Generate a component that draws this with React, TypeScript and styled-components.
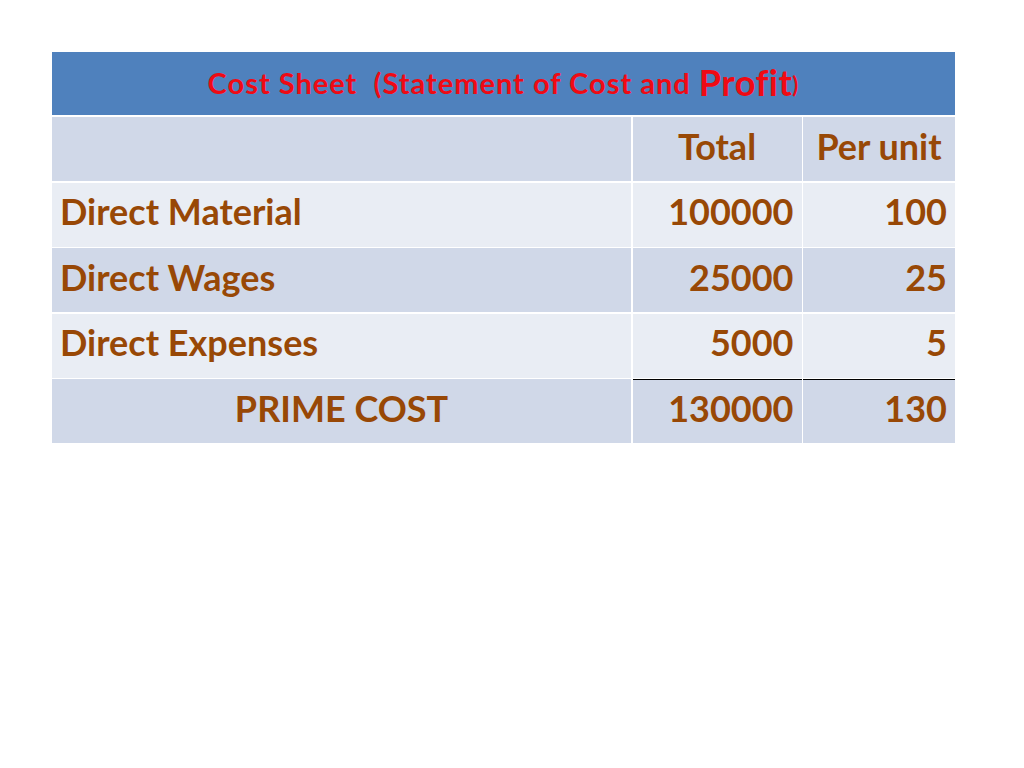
import styled, { createGlobalStyle } from 'styled-components';

const GlobalStyle = createGlobalStyle`
  html, body {
    margin: 0;
    padding: 0;
    background: #ffffff;
  }
  body {
    font-family: Lato, "Open Sans", sans-serif;
    font-variant-ligatures: none;
  }
`;

interface Row {
  label: string;
  total: string;
  perUnit: string;
}

const rows: Row[] = [
  { label: 'Direct Material', total: '100000', perUnit: '100' },
  { label: 'Direct Wages', total: '25000', perUnit: '25' },
  { label: 'Direct Expenses', total: '5000', perUnit: '5' },
];

const App = () => (
  <>
    <GlobalStyle />
    <Page>
      <Sheet>
        <TitleBar>
          Cost Sheet&nbsp; (Statement of Cost and <Big>Profit</Big>
          <Small>)</Small>
        </TitleBar>
        <Grid>
          <Cell $shade="dark" />
          <Cell $shade="dark" $align="center">
            Total
          </Cell>
          <Cell $shade="dark" $align="center">
            Per unit
          </Cell>
          {rows.map((row, i) => {
            const shade = i % 2 === 0 ? 'light' : 'dark';
            return [
              <Cell key={`${row.label}-l`} $shade={shade}>
                {row.label}
              </Cell>,
              <Cell key={`${row.label}-t`} $shade={shade} $align="right">
                {row.total}
              </Cell>,
              <Cell key={`${row.label}-p`} $shade={shade} $align="right">
                {row.perUnit}
              </Cell>,
            ];
          })}
          <Cell $shade="dark" $align="center">
            PRIME COST
          </Cell>
          <Cell $shade="dark" $align="right" $ruled>
            130000
          </Cell>
          <Cell $shade="dark" $align="right" $ruled>
            130
          </Cell>
        </Grid>
      </Sheet>
    </Page>
  </>
);

const Page = styled.div`
  width: 1024px;
  height: 768px;
  padding: 52px 0 0 52px;
  box-sizing: border-box;
`;
const Sheet = styled.div`
  width: 903px;
  display: flex;
  flex-direction: column;
  gap: 2px;
`;
const TitleBar = styled.div`
  height: 63px;
  background: #4f81bd;
  color: #f00a14;
  font-weight: 700;
  font-size: 29px;
  letter-spacing: 1px;
  display: flex;
  align-items: center;
  justify-content: center;
  padding-bottom: 3px;
  box-sizing: border-box;
`;
const Big = styled.span`
  font-size: 36px;
  margin-left: 8px;
  letter-spacing: 0.5px;
`;
const Small = styled.span`
  font-size: 22px;
  margin-top: 5px;
`;
const Grid = styled.div`
  display: grid;
  grid-template-columns: 579px 169px 152px;
  grid-auto-rows: 64px;
  column-gap: 1.5px;
  row-gap: 1.5px;
`;
const Cell = styled.div<{
  $shade: 'light' | 'dark';
  $align?: 'left' | 'center' | 'right';
  $ruled?: boolean;
}>`
  background: ${({ $shade }) => ($shade === 'dark' ? '#d0d8e8' : '#e9edf4')};
  color: #984806;
  font-weight: 700;
  font-size: 36px;
  display: flex;
  align-items: center;
  justify-content: ${({ $align }) =>
    $align === 'right' ? 'flex-end' : $align === 'center' ? 'center' : 'flex-start'};
  padding: 0 8px 7px;
  box-sizing: border-box;
  border-top: ${({ $ruled }) => ($ruled ? '1px solid #000000' : 'none')};
`;

export default App;
